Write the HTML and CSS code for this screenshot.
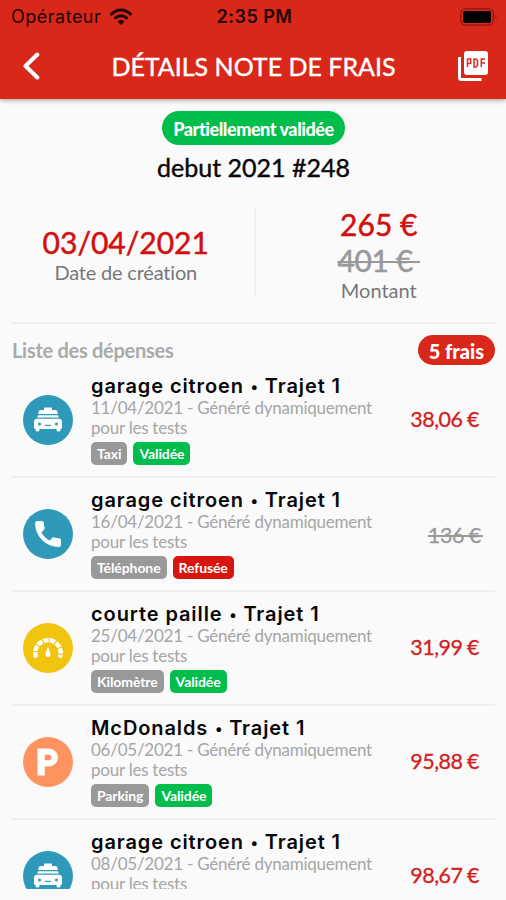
FILE: index.html
```html
<!DOCTYPE html>
<html lang="fr">
<head>
<meta charset="utf-8">
<title>Détails note de frais</title>
<link rel="stylesheet" href="styles.css">
</head>
<body>
<svg class="defs" width="0" height="0" aria-hidden="true">
  <symbol id="taxi" viewBox="0 0 30 26">
    <path d="M11 3V1.500Q11 .5 12 .5h6q1 0 1 1V3h3.500q1.500 0 1.800 1.500L24.800 7H5.200l.5-2.500Q6 3 7.500 3zM5 8.200h20l.8 2.300H4.200zM4 11.800h22q3 .4 3 3.500v5.200q0 1.200-1.500 1.500v1q0 1.500-2 1.500t-2-1.500v-1h-17v1q0 1.500-2 1.500t-2-1.500v-1Q1 21.700 1 20.500v-5.200q0-3.100 3-3.500z" fill="#fff"/>
    <circle cx="6.500" cy="17" r="1.600" fill="#2f99b9"/><circle cx="23.500" cy="17" r="1.600" fill="#2f99b9"/>
    <path d="M12 18.500h6" stroke="#2f99b9" stroke-width="1.300"/>
  </symbol>
</svg>
<header class="appbar">
  <div class="status">
    <div class="carrier"><span class="operator">Opérateur</span>
      <svg width="24" height="18" viewBox="0 0 24 18" fill="none" stroke="#210504" stroke-width="3"><path d="M1.500 6.800Q12-2.800 22.500 6.800M5.500 10.700Q12 4.800 18.500 10.700"/><path d="M12 17l-3.500-3.600Q12 10.600 15.500 13.400z" fill="#210504" stroke="none"/></svg>
    </div>
    <span class="clock">2:35 PM</span>
    <svg class="battery" width="38" height="18" viewBox="0 0 38 18"><rect x=".8" y=".8" width="32.400" height="16.400" rx="4.500" fill="none" stroke="#8b1710" stroke-width="1.300"/><rect x="3" y="3" width="28" height="12" rx="2" fill="#000"/><path d="M35.500 6.500q2 2.500 0 5z" fill="#8b1710"/></svg>
  </div>
  <div class="navbar">
    <svg width="18" height="30" viewBox="0 0 18 30" fill="none" stroke="#fff" stroke-width="4" stroke-linecap="round" stroke-linejoin="round"><path d="M15.300 3.500L3.500 15l11.800 11.500"/></svg>
    <h1 class="title">DÉTAILS NOTE DE FRAIS</h1>
    <svg width="30" height="30" viewBox="0 0 30 30"><path d="M1.500 6v20.500q0 2 2 2H23.500" fill="none" stroke="#fff" stroke-width="3"/><rect x="6" y="0" width="24" height="24" rx="3" fill="#fff"/><path d="M9.500 16V8h3.200v4.500H9.500M16 8h2l1.500 1.500v5L18 16h-2zM23.300 16V8h3.700M23.300 12H27" fill="none" stroke="#d92b20" stroke-width="1.500"/></svg>
  </div>
</header>
<main>
  <section class="summary">
    <span class="state">Partiellement validée</span>
    <h2 class="name">debut 2021 #248</h2>
    <div class="facts">
      <div class="fact"><span class="big date">03/04/2021</span><span class="label created">Date de création</span></div>
      <div class="fact"><span class="big">265 €</span><s class="big old">401 €&nbsp;</s><span class="label amount">Montant</span></div>
    </div>
  </section>
  <div class="listhead"><span class="caption">Liste des dépenses</span><span class="count">5 frais</span></div>
  <ul class="list">
    <li class="row">
      <span class="icon blue"><svg width="30" height="26"><use href="#taxi"/></svg></span>
      <div class="body"><h3 class="merchant">garage citroen <i class="dot">•</i> Trajet 1</h3><p class="desc">11/04/2021 - Généré dynamiquement<br>pour les tests</p><div class="tags"><span class="tag">Taxi</span><span class="tag ok">Validée</span></div></div>
      <span class="price">38,06 €</span>
    </li>
    <li class="row">
      <span class="icon blue"><svg width="26" height="26" viewBox="2.500 2.500 19 19" fill="#fff" stroke="#fff" stroke-width=".9"><path d="M6.620 10.790c1.440 2.830 3.760 5.140 6.590 6.590l2.200-2.200c.27-.27.67-.36 1.020-.24 1.120.37 2.330.57 3.570.57.55 0 1 .45 1 1V20c0 .55-.45 1-1 1C10.610 21 3 13.390 3 4c0-.55.45-1 1-1h3.500c.55 0 1 .45 1 1 0 1.250.2 2.450.57 3.570.11.35.03.74-.25 1.020z"/></svg></span>
      <div class="body"><h3 class="merchant">garage citroen <i class="dot">•</i> Trajet 1</h3><p class="desc">16/04/2021 - Généré dynamiquement<br>pour les tests</p><div class="tags"><span class="tag">Téléphone</span><span class="tag no">Refusée</span></div></div>
      <s class="price refused">136 €&#8201;</s>
    </li>
    <li class="row">
      <span class="icon yellow"><svg width="32" height="26" viewBox="0 0 32 26"><path d="M4.200 22.500A12.700 12.700 0 1 1 27.800 22.500" fill="none" stroke="#fff" stroke-width="4.400" stroke-dasharray="5.500 1.100"/><path d="M16 11.500l2.200 6.200q1.200 4-2.200 4.300-3.400-.3-2.200-4.300z" fill="#fff"/></svg></span>
      <div class="body"><h3 class="merchant">courte paille <i class="dot">•</i> Trajet 1</h3><p class="desc">25/04/2021 - Généré dynamiquement<br>pour les tests</p><div class="tags"><span class="tag">Kilomètre</span><span class="tag ok">Validée</span></div></div>
      <span class="price">31,99 €</span>
    </li>
    <li class="row">
      <span class="icon orange"><svg width="22" height="28" viewBox="0 0 22 28"><path fill="#fff" fill-rule="evenodd" d="M.5 .5H12a9 9 0 0 1 0 18H7.700v9H.5zM7.700 6.700v5.600h4a2.800 2.800 0 0 0 0-5.600z"/></svg></span>
      <div class="body"><h3 class="merchant">McDonalds <i class="dot">•</i> Trajet 1</h3><p class="desc">06/05/2021 - Généré dynamiquement<br>pour les tests</p><div class="tags"><span class="tag">Parking</span><span class="tag ok">Validée</span></div></div>
      <span class="price">95,88 €</span>
    </li>
    <li class="row">
      <span class="icon blue"><svg width="30" height="26"><use href="#taxi"/></svg></span>
      <div class="body"><h3 class="merchant">garage citroen <i class="dot">•</i> Trajet 1</h3><p class="desc">08/05/2021 - Généré dynamiquement<br>pour les tests</p></div>
      <span class="price">98,67 €</span>
    </li>
  </ul>
</main>
</body>
</html>
```
FILE: styles.css
```css
* { box-sizing: border-box; margin: 0; padding: 0; }
body { width: 506px; height: 900px; overflow: hidden; background: #fafafa; font-family: Lato, sans-serif; color: #080808; }
.defs { display: block; height: 0; }
svg { display: block; flex: none; }
.appbar { height: 99px; background: #d9271a; box-shadow: 0 1px 5px rgba(0,0,0,.4); }
.status { height: 33px; display: grid; grid-template-columns: 1fr auto 1fr; align-items: center; padding: 0 8px 0 11px; font-family: Inter, sans-serif; font-size: 18px; color: #210504; }
.carrier { display: flex; align-items: center; gap: 8px; }
.operator { letter-spacing: .5px; }
.clock { font-weight: 600; letter-spacing: .5px; }
.battery { justify-self: end; }
.navbar { height: 66px; display: flex; align-items: center; justify-content: space-between; padding: 0 18px 0 22px; color: #fff; }
.title { font-size: 25px; font-weight: 400; -webkit-text-stroke: .4px; white-space: nowrap; margin-left: 9px; }
.summary { height: 225px; margin: 0 11px 0 12px; padding-top: 12px; border-bottom: 2px solid #eee; display: flex; flex-direction: column; align-items: center; }
.state { height: 34px; line-height: 36px; padding: 0 11px; border-radius: 17px; background: #00bd4c; color: #fff; font-size: 18px; font-weight: 900; letter-spacing: -.45px; white-space: nowrap; }
.name { font-size: 25px; line-height: 30px; margin-top: 7px; font-weight: 400; -webkit-text-stroke: .4px; white-space: nowrap; }
.facts { align-self: stretch; height: 88px; margin-top: 26px; display: grid; grid-template-columns: 1fr 1fr; }
.fact { height: 92px; display: flex; flex-direction: column; align-items: center; justify-content: center; white-space: nowrap; padding-right: 14px; }
.fact + .fact { padding: 0 0 0 9px; background: linear-gradient(#f0f0f0, #f0f0f0) no-repeat 0 0 / 2px 88px; }
.big { font-size: 30px; line-height: 36px; color: #d30f0f; -webkit-text-stroke: .5px; }
.old { color: #999; letter-spacing: -.4px; text-decoration-thickness: 2px; }
.label { font-size: 20px; line-height: 24px; color: #777; }
.created { letter-spacing: -.2px; }
.listhead { height: 40px; margin: 0 11px 0 12px; padding-top: 11px; display: flex; align-items: flex-start; justify-content: space-between; }
.caption { color: #aaa; font-size: 20px; line-height: 31px; font-weight: 700; letter-spacing: -.28px; }
.count { height: 30px; line-height: 32px; padding: 0 11px; border-radius: 15px; background: #d9271a; color: #fff; font-size: 20px; font-weight: 900; }
.list { list-style: none; height: 525px; margin: 0 11px 0 12px; overflow: hidden; }
.row { height: 114px; border-bottom: 2px solid #eee; display: flex; padding: 10px 16px 0 11px; }
.icon { width: 50px; height: 50px; margin-top: 21px; border-radius: 50%; display: flex; align-items: center; justify-content: center; flex: none; }
.blue { background: #2f99b9; }
.yellow { background: #f1c40f; }
.orange { background: #ff9360; }
.body { margin-left: 18px; flex: 1; min-width: 0; white-space: nowrap; }
.merchant { font-family: Inter, sans-serif; font-size: 20px; font-weight: 600; line-height: 24px; letter-spacing: .9px; }
.dot { display: inline-block; width: 9px; font-size: 15px; font-style: normal; line-height: 1; text-align: center; letter-spacing: 0; vertical-align: 1px; }
.desc { font-size: 17px; line-height: 20px; color: #a6a6a6; letter-spacing: -.24px; }
.tags { display: flex; gap: 6px; margin-top: 4px; }
.tag { height: 23px; line-height: 24px; padding: 0 6px; border-radius: 5px; background: #999; color: #fff; font-size: 14px; font-weight: 700; letter-spacing: -.1px; }
.ok { background: #00bd4c; }
.no { background: #d9150f; }
.price { margin-top: 32px; font-size: 21.500px; line-height: 26px; color: #d32020; -webkit-text-stroke: .3px; letter-spacing: -.5px; word-spacing: -.5px; white-space: nowrap; }
.refused { color: #999; margin-top: 34px; margin-right: -4px; letter-spacing: -.4px; text-decoration-thickness: 2px; }
```
